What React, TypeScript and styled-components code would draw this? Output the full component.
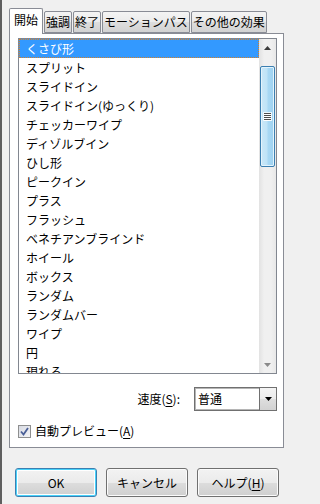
import styled, { createGlobalStyle } from "styled-components";

const GlobalStyle = createGlobalStyle`
  html, body {
    margin: 0;
    padding: 0;
    background: #f0f0f0;
  }
  * {
    box-sizing: border-box;
  }
`;

const font = `"Noto Sans CJK JP", "Noto Sans", sans-serif`;

const Dialog = styled.div`
  width: 288px;
  height: 504px;
  background: #f0f0f0;
  border-left: 2px solid #5f5f5f;
  padding: 8px 4px 0 7px;
  font-family: ${font};
  font-size: 12px;
  color: #000;
  display: flex;
  flex-direction: column;
`;

const TabRow = styled.div`
  height: 25px;
  display: flex;
  align-items: flex-end;
  gap: 1px;
  position: relative;
  z-index: 1;
`;

const Tab = styled.div<{ $active?: boolean }>`
  height: ${(p) => (p.$active ? "26px" : "22px")};
  padding: ${(p) => (p.$active ? "0 4px" : "0 1px")};
  margin-bottom: ${(p) => (p.$active ? "-1px" : "0")};
  border: 1px solid #898c95;
  border-bottom: ${(p) => (p.$active ? "none" : "1px solid #898c95")};
  border-radius: 2px 2px 0 0;
  background: ${(p) =>
    p.$active
      ? "#ffffff"
      : "linear-gradient(#f4f4f4 0%, #ebebeb 50%, #dedede 50%, #d2d2d2 100%)"};
  line-height: ${(p) => (p.$active ? "22px" : "20px")};
  white-space: nowrap;
`;

const Panel = styled.div`
  height: 415px;
  background: #ffffff;
  border: 1px solid #898c95;
  padding: 4px 6px 0 8px;
  display: flex;
  flex-direction: column;
`;

const ListBox = styled.div`
  height: 336px;
  border: 1px solid #828790;
  display: flex;
  overflow: hidden;
`;

const Items = styled.div`
  flex: 1;
  overflow: hidden;
`;

const Item = styled.div<{ $selected?: boolean }>`
  height: 19px;
  line-height: 17px;
  padding-left: 6px;
  white-space: nowrap;
  color: ${(p) => (p.$selected ? "#ffffff" : "#000000")};
  background: ${(p) => (p.$selected ? "#3399ff" : "transparent")};
  border: 1px ${(p) => (p.$selected ? "dotted #d3802a" : "solid transparent")};
`;

const ScrollBar = styled.div`
  width: 17px;
  background: linear-gradient(to right, #e2e2e2, #f0f0f0 30%, #f0f0f0 70%, #e8e8e8);
  display: flex;
  flex-direction: column;
  align-items: center;
`;

const ArrowBox = styled.div`
  height: 17px;
  width: 17px;
  display: flex;
  align-items: center;
  justify-content: center;
`;

const Track = styled.div`
  flex: 1;
  width: 100%;
  padding: 10px 1px 0 1px;
`;

const Thumb = styled.div`
  height: 101px;
  border: 1px solid #3c7fb1;
  border-radius: 2px;
  background: linear-gradient(to right, #cbe8f8 0%, #bfe3f7 45%, #a8d8f4 55%, #9fd2f1 100%);
  box-shadow: inset 0 0 0 1px #e3f4fd;
  display: flex;
  align-items: center;
  justify-content: center;
`;

const Grip = styled.div`
  width: 9px;
  display: flex;
  flex-direction: column;
  gap: 1px;
  padding: 1px 0;
  background: #eef8fe;
  span {
    display: block;
    height: 1px;
    background: #4d4d4d;
    margin: 0 1px;
    box-shadow: 0 1px 0 #ffffff;
  }
`;

const SpeedRow = styled.div`
  margin-top: 13px;
  display: flex;
  justify-content: flex-end;
  align-items: center;
  gap: 14px;
`;

const Label = styled.span`
  line-height: 16px;
`;

const Key = styled.span`
  text-decoration: underline;
  text-underline-offset: 2px;
`;

const Combo = styled.div`
  width: 83px;
  height: 24px;
  border: 1px solid #707070;
  box-shadow: inset 0 0 0 1px #b5b5b5;
  background: #ffffff;
  display: flex;
  align-items: stretch;
`;

const ComboText = styled.div`
  flex: 1;
  padding-left: 3px;
  line-height: 21px;
`;

const ComboButton = styled.div`
  width: 17px;
  border-left: 1px solid #707070;
  background: linear-gradient(#f4f4f4 0%, #ebebeb 50%, #dedede 50%, #d2d2d2 100%);
  display: flex;
  align-items: center;
  justify-content: center;
`;

const CheckRow = styled.label`
  margin-top: 12px;
  display: flex;
  align-items: center;
  gap: 4px;
  line-height: 16px;
`;

const CheckBox = styled.span`
  width: 13px;
  height: 13px;
  border: 1px solid #8e8f8f;
  background: linear-gradient(135deg, #d8dbe3, #f4f4f6);
  display: flex;
  align-items: center;
  justify-content: center;
`;

const ButtonRow = styled.div`
  margin-top: 20px;
  padding-left: 6px;
  display: flex;
  gap: 9px;
`;

const Button = styled.button<{ $default?: boolean }>`
  width: 82px;
  height: 29px;
  font-family: ${font};
  font-size: 12px;
  color: #000;
  padding: 0;
  border-radius: 3px;
  border: 1px solid ${(p) => (p.$default ? "#3c7fb1" : "#707070")};
  box-shadow: ${(p) =>
    p.$default ? "inset 0 0 0 1px #48d2fa, inset 0 0 0 2px #ffffff" : "inset 0 0 0 1px #fbfbfb"};
  background: linear-gradient(#f2f2f2 0%, #ebebeb 50%, #dddddd 50%, #cfcfcf 100%);
`;

const UpArrow = () => (
  <svg width="7" height="4" viewBox="0 0 7 4">
    <path d="M3.5 0 L7 4 L0 4 Z" fill="#3c3c3c" />
  </svg>
);

const DownArrow = ({ color = "#3c3c3c" }: { color?: string }) => (
  <svg width="7" height="4" viewBox="0 0 7 4">
    <path d="M0 0 L7 0 L3.5 4 Z" fill={color} />
  </svg>
);

const effects = [
  "くさび形",
  "スプリット",
  "スライドイン",
  "スライドイン(ゆっくり)",
  "チェッカーワイプ",
  "ディゾルブイン",
  "ひし形",
  "ピークイン",
  "プラス",
  "フラッシュ",
  "ベネチアンブラインド",
  "ホイール",
  "ボックス",
  "ランダム",
  "ランダムバー",
  "ワイプ",
  "円",
  "現れる",
];

const tabs = ["開始", "強調", "終了", "モーションパス", "その他の効果"];

const App = () => {
  return (
    <>
      <GlobalStyle />
      <Dialog>
        <TabRow>
          {tabs.map((t, i) => (
            <Tab key={t} $active={i === 0}>
              {t}
            </Tab>
          ))}
        </TabRow>
        <Panel>
          <ListBox>
            <Items>
              {effects.map((e, i) => (
                <Item key={e} $selected={i === 0}>
                  {e}
                </Item>
              ))}
            </Items>
            <ScrollBar>
              <ArrowBox>
                <UpArrow />
              </ArrowBox>
              <Track>
                <Thumb>
                  <Grip>
                    <span />
                    <span />
                    <span />
                    <span />
                  </Grip>
                </Thumb>
              </Track>
              <ArrowBox>
                <DownArrow color="#8a8a8a" />
              </ArrowBox>
            </ScrollBar>
          </ListBox>
          <SpeedRow>
            <Label>
              速度(<Key>S</Key>):
            </Label>
            <Combo>
              <ComboText>普通</ComboText>
              <ComboButton>
                <DownArrow color="#000" />
              </ComboButton>
            </Combo>
          </SpeedRow>
          <CheckRow>
            <CheckBox>
              <svg width="9" height="9" viewBox="0 0 9 9">
                <path d="M1 4.5 L3.5 7.5 L8 1" stroke="#4a5f97" strokeWidth="1.8" fill="none" />
              </svg>
            </CheckBox>
            <span>
              自動プレビュー(<Key>A</Key>)
            </span>
          </CheckRow>
        </Panel>
        <ButtonRow>
          <Button $default>OK</Button>
          <Button>キャンセル</Button>
          <Button>
            ヘルプ(<Key>H</Key>)
          </Button>
        </ButtonRow>
      </Dialog>
    </>
  );
};

export default App;
